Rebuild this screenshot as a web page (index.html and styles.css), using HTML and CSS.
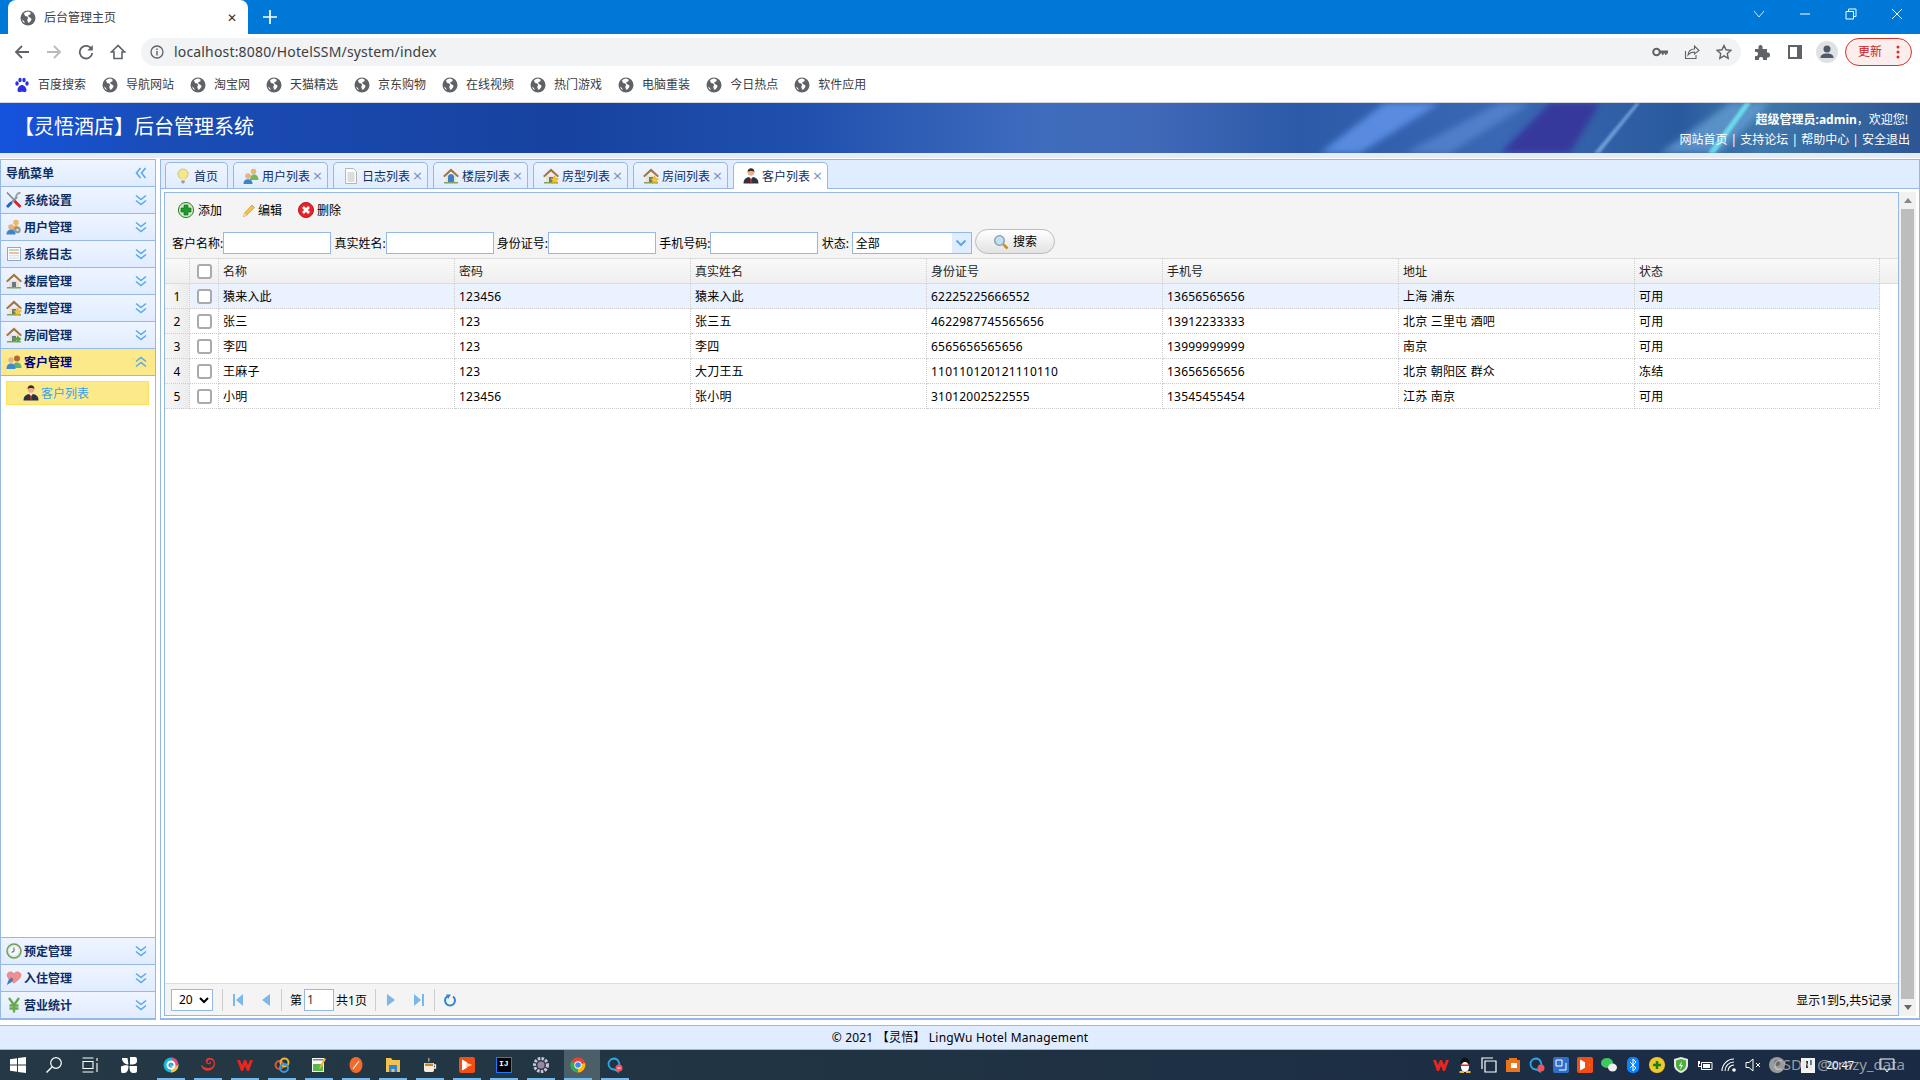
FILE: index.html
```html
<!DOCTYPE html>
<html lang="zh-CN">
<head>
<meta charset="utf-8">
<title>后台管理主页</title>
<link rel="stylesheet" href="styles.css">
</head>
<body>
<svg class="defs" width="0" height="0" aria-hidden="true">
  <defs>
    <symbol id="globe" viewBox="0 0 16 16"><circle cx="8" cy="8" r="7.500" fill="#5f6368"/><path fill="#fff" d="M8.500 1.600C6.800 1.600 5 2.400 3.900 3.600l1.200 2.300 2.200.6.9 1.500-1 1.800.9 3 1.600-.6 1.800-2.400-.4-1.600-2.500-1.400-.4-1.500 2-.9.6-1.600zM2 9.500l2 1.500.8 2.300C3.400 12.500 2.400 11 2 9.500z"/></symbol>
    <symbol id="chev" viewBox="0 0 16 16"><path fill="none" stroke="#5aa9ea" stroke-width="1.600" d="M3 3.500l5 4 5-4M3 8.500l5 4 5-4"/></symbol>
    <symbol id="chevup" viewBox="0 0 16 16"><path fill="none" stroke="#5aa9ea" stroke-width="1.600" d="M3 7.500l5-4 5 4M3 12.500l5-4 5 4"/></symbol>
    <symbol id="chevl" viewBox="0 0 16 16"><path fill="none" stroke="#5aa9ea" stroke-width="1.600" d="M7.500 3l-4 5 4 5M12.500 3l-4 5 4 5"/></symbol>
    <symbol id="tools" viewBox="0 0 16 16"><path stroke="#7b8794" stroke-width="1.600" d="M1 .5L14 14"/><path stroke="#d22" stroke-width="2.800" d="M8 8.500l6.500 6.500"/><path stroke="#9aa4ad" stroke-width="2" fill="none" d="M14.500 1a3.500 3.500 0 0 0-4 4.500"/><path stroke="#8a949e" stroke-width="2.200" d="M11 5L3 13"/><path stroke="#1f62c9" stroke-width="3" d="M5.500 10.500L1 15"/></symbol>
    <symbol id="users" viewBox="0 0 16 16"><circle cx="10" cy="3.500" r="2.800" fill="#eab669"/><path fill="#d6a24f" d="M6.500 11c0-3 1.500-4.500 3.500-4.500s4 1.500 4 4.500z"/><circle cx="11.500" cy="11" r="3.200" fill="#8d9a8f"/><circle cx="11.500" cy="11" r="1.200" fill="#dfe6df"/><circle cx="5" cy="8" r="2.800" fill="#e8b189"/><path fill="#3d86c6" d="M.5 15.500c0-3.500 2-5 4.500-5s4.500 1.500 4.500 5z"/></symbol>
    <symbol id="usersg" viewBox="0 0 16 16"><circle cx="10.500" cy="3.500" r="2.800" fill="#eab669"/><path fill="#78b94f" d="M7 12c0-3.500 1.500-5.500 4-5.500s4.500 2 4.500 5.500z"/><circle cx="5" cy="8" r="2.800" fill="#e8b189"/><path fill="#3d86c6" d="M.5 16c0-3.500 2-4.800 4.500-4.800s4.500 1.300 4.500 4.800z"/></symbol>
    <symbol id="log" viewBox="0 0 16 16"><rect x="1.500" y="1.500" width="13" height="13" fill="#fff" stroke="#8fa6c4"/><path fill="#b8e0b0" d="M3 3h10v2H3z"/><path fill="#f6b7b0" d="M3 6h10v2H3z"/><path fill="#dde3ee" d="M3 9h10v1.500H3zM3 11.500h10V13H3z"/></symbol>
    <symbol id="doc" viewBox="0 0 16 16"><path fill="#fdfdfd" stroke="#b4b4b4" d="M2.500.5h8l3 3v12h-11z"/><path stroke="#bcbcbc" d="M4.500 5h7M4.500 7h7M4.500 9h7M4.500 11h7M4.500 13h7"/></symbol>
    <symbol id="house" viewBox="0 0 16 16"><path fill="#e9e3d2" d="M3 7.500h10V14H3z"/><path fill="#a5743f" d="M8 .5L0 8l1.500 1.200L8 3.500l6.500 5.700L16 8z"/><path fill="#6b7680" d="M6 9h4v5H6z"/><path fill="#7fa45a" d="M1 14h14v1.500H1z"/></symbol>
    <symbol id="housestar" viewBox="0 0 16 16"><use href="#house"/><path fill="#f6c92f" stroke="#c79a16" stroke-width=".5" d="M11.500 8l1.200 2.500 2.800.3-2 1.900.5 2.800-2.500-1.400-2.500 1.400.5-2.800-2-1.900 2.800-.3z"/></symbol>
    <symbol id="housearrow" viewBox="0 0 16 16"><use href="#house"/><path fill="#52a83c" d="M7 10.500h4V8.500l4.500 3.500L11 15.500v-2H7z"/></symbol>
    <symbol id="houseblue" viewBox="0 0 16 16"><use href="#house"/><path fill="#3f7fc4" d="M5 9c0-2 1.500-3 3-3s3 1 3 3v5H5z"/></symbol>
    <symbol id="cust" viewBox="0 0 16 16"><circle cx="11" cy="4.500" r="3" fill="#b5672b"/><path fill="#5fb17a" d="M7 14c0-4 1.500-5.500 4-5.500s4.500 1.500 4.500 5.500z"/><circle cx="5" cy="6" r="2.700" fill="#e8b189"/><path fill="#3b8bd0" d="M.5 15c0-4 2-5.500 4.500-5.500S9.500 11 9.500 15z"/></symbol>
    <symbol id="man" viewBox="0 0 16 16"><circle cx="8" cy="4.300" r="3.400" fill="#e8b189"/><path fill="#3a2a20" d="M4.600 4c0-2.600 1.500-3.800 3.400-3.800S11.400 1.400 11.400 4C10 2.800 6 2.800 4.600 4z"/><path fill="#2c3444" d="M.5 15.500c0-5 3-6.500 7.500-6.500s7.500 1.500 7.500 6.500z"/><path fill="#fff" d="M6.300 9h3.400L8 12z"/><path fill="#c12a2a" d="M7.500 10h1l.5 4-1 1.500L7 14z"/></symbol>
    <symbol id="bulb" viewBox="0 0 16 16"><circle cx="8" cy="6" r="5" fill="#f3e98c" stroke="#c9b94f" stroke-width=".8"/><path fill="#f3e98c" d="M6 10h4l-.4 2.500H6.400z"/><path fill="#9a9a9a" d="M6.300 12.500h3.400v2L8 15.800l-1.700-1.300z"/></symbol>
    <symbol id="clock" viewBox="0 0 16 16"><circle cx="8" cy="8" r="7" fill="#dfe8d8" stroke="#6fa05a" stroke-width="1.500"/><circle cx="8" cy="8" r="4.800" fill="#f4f6fa"/><path stroke="#56708f" stroke-width="1.100" fill="none" d="M8 4.500V8l-2.300 1.500"/></symbol>
    <symbol id="heart" viewBox="0 0 16 16"><path fill="#f08f8f" stroke="#d96a6a" stroke-width=".6" d="M8 13C2 9 .5 6.500 1.500 3.800 2.500 1.500 6 1 8 3.800 10 1 13.500 1.500 14.700 3.800 15.700 6.500 14 9 8 13z"/><path fill="#4a78b8" d="M.8 15l1.700-5 3-2.500 2 2-2.500 3z"/></symbol>
    <symbol id="yen" viewBox="0 0 16 16"><path fill="none" stroke="#6aa84f" stroke-width="2.400" d="M3 1l5 7 5-7M8 8v7.500M3.500 8.500h9M3.500 11.500h9"/></symbol>
    <symbol id="add" viewBox="0 0 16 16"><circle cx="8" cy="8" r="7.600" fill="#cfe8c8" stroke="#2f7f2f"/><path fill="#1c9a2a" stroke="#0e6a18" stroke-width=".6" d="M6 3h4v3h3v4h-3v3H6v-3H3V6h3z"/></symbol>
    <symbol id="pencil" viewBox="0 0 16 16"><path fill="#f2c14e" stroke="#c48a20" stroke-width=".6" d="M10 3l2.500 2.500-8 8L1.500 14.500 2.500 11z"/><path fill="#f5d9a8" d="M2.500 11l2 2.500-3 1z"/></symbol>
    <symbol id="del" viewBox="0 0 16 16"><circle cx="8" cy="8" r="7.500" fill="#e8232a" stroke="#b9151b"/><path stroke="#fff" stroke-width="2.600" d="M5 5l6 6M11 5l-6 6"/></symbol>
    <symbol id="search" viewBox="0 0 16 16"><circle cx="6.500" cy="6.500" r="4.800" fill="#bfe0f5" stroke="#8a97a3" stroke-width="1.300"/><path stroke="#c88b2a" stroke-width="2.500" d="M10.300 10.300l4.200 4.200"/></symbol>
  </defs>
</svg>

<div class="titlebar">
  <div class="ctab">
    <svg class="i16"><use href="#globe"/></svg>
    <span class="ctab-title">后台管理主页</span>
    <span class="ctab-x">✕</span>
  </div>
  <svg class="newtab" viewBox="0 0 14 14"><path stroke="#fff" stroke-width="1.700" d="M7 0v14M0 7h14"/></svg>
  <div class="winctl">
    <svg class="wc" viewBox="0 0 14 14"><path fill="none" stroke="#cfe6f8" d="M2 4l5 6 5-6"/></svg>
    <svg class="wc" viewBox="0 0 14 14"><path stroke="#fff" d="M2 7h10"/></svg>
    <svg class="wc" viewBox="0 0 14 14"><path fill="none" stroke="#fff" d="M2 4.500h7.500V12H2zM4.500 4.500V2H12v7.500H9.500"/></svg>
    <svg class="wc" viewBox="0 0 14 14"><path stroke="#fff" d="M2 2l10 10M12 2L2 12"/></svg>
  </div>
</div>

<div class="toolbar">
  <svg class="nav" viewBox="0 0 16 16"><path fill="none" stroke="#5f6368" stroke-width="1.800" d="M15 8H2M8 2L2 8l6 6"/></svg>
  <svg class="nav" viewBox="0 0 16 16"><path fill="none" stroke="#b8babd" stroke-width="1.800" d="M1 8h13M8 2l6 6-6 6"/></svg>
  <svg class="nav" viewBox="0 0 16 16"><path fill="none" stroke="#5f6368" stroke-width="1.800" d="M13.500 5A6.300 6.300 0 1 0 14.300 9"/><path fill="#5f6368" d="M14.800 1v5.500H9.300z"/></svg>
  <svg class="nav" viewBox="0 0 16 16"><path fill="none" stroke="#5f6368" stroke-width="1.600" d="M8 1.500L1.500 8H4v6.500h8V8h2.500z"/></svg>
  <div class="omni">
    <svg class="info" viewBox="0 0 14 14"><circle cx="7" cy="7" r="6" fill="none" stroke="#5f6368" stroke-width="1.300"/><path stroke="#5f6368" stroke-width="1.400" d="M7 6v4.500M7 3.500v1.500"/></svg>
    <span class="url">localhost:8080/HotelSSM/system/index</span>
    <span class="omni-r">
      <svg class="nav" viewBox="0 0 16 16"><circle cx="4.500" cy="8" r="3.300" fill="none" stroke="#5f6368" stroke-width="2"/><path fill="#5f6368" d="M7.500 6.500H16V9.500H14.500V11H13V9.500H11.500V11H10V9.500H7.500z"/></svg>
      <svg class="nav" viewBox="0 0 16 16"><path fill="none" stroke="#5f6368" stroke-width="1.100" d="M1.500 7v7.500H12V11M4 11c.5-4 3-6 6.500-6V2L15 6.500 10.500 10V8C8 8 5.500 9 4 11z"/></svg>
      <svg class="nav" viewBox="0 0 16 16"><path fill="none" stroke="#5f6368" stroke-width="1.400" d="M8 1.500l2 4.300 4.700.6-3.400 3.200.9 4.700L8 11.900l-4.200 2.400.9-4.700L1.300 6.400 6 5.800z"/></svg>
    </span>
  </div>
  <div class="tool-r">
    <svg class="nav" viewBox="0 0 16 16"><path fill="#5f6368" d="M1 5h3.500C4 2.500 5 1 6.500 1S9 2.500 8.500 5H13v3.500c2.500-.5 3 1 3 2.500s-.5 3-3 2.500V16H9c.5-2-.5-3-2-3s-2.500 1-2 3H1v-4c2 .5 3-.5 3-2S3 7.500 1 8z"/></svg>
    <svg class="nav" viewBox="0 0 16 16"><path fill="#5f6368" d="M1 1h14v14H1zM3 3v10h7V3z"/></svg>
    <svg class="avatar" viewBox="0 0 22 22"><circle cx="11" cy="11" r="11" fill="#dfe1e5"/><circle cx="11" cy="8" r="3.500" fill="#4f5a66"/><path fill="#4f5a66" d="M4.500 17c0-3.500 3-4.500 6.500-4.500s6.500 1 6.500 4.500z"/></svg>
    <div class="update"><span>更新</span><svg class="dots" viewBox="0 0 4 16"><circle cx="2" cy="3" r="1.500"/><circle cx="2" cy="8" r="1.500"/><circle cx="2" cy="13" r="1.500"/></svg></div>
  </div>
</div>

<div class="bookmarks">
  <span class="bm"><svg class="i16" viewBox="0 0 16 16"><path fill="#2932e1" d="M8 8c2 0 4.500 2.500 4.500 5 0 1.500-1 2.500-2.500 2-1.500-.4-2.500-.4-4 0-1.500.5-2.500-.5-2.500-2 0-2.500 2.500-5 4.500-5z"/><ellipse cx="3" cy="6.500" rx="1.700" ry="2.200" fill="#2932e1"/><ellipse cx="6" cy="3" rx="1.700" ry="2.300" fill="#2932e1"/><ellipse cx="10" cy="3" rx="1.700" ry="2.300" fill="#2932e1"/><ellipse cx="13" cy="6.500" rx="1.700" ry="2.200" fill="#2932e1"/></svg>百度搜索</span>
  <span class="bm"><svg class="i16"><use href="#globe"/></svg>导航网站</span>
  <span class="bm"><svg class="i16"><use href="#globe"/></svg>淘宝网</span>
  <span class="bm"><svg class="i16"><use href="#globe"/></svg>天猫精选</span>
  <span class="bm"><svg class="i16"><use href="#globe"/></svg>京东购物</span>
  <span class="bm"><svg class="i16"><use href="#globe"/></svg>在线视频</span>
  <span class="bm"><svg class="i16"><use href="#globe"/></svg>热门游戏</span>
  <span class="bm"><svg class="i16"><use href="#globe"/></svg>电脑重装</span>
  <span class="bm"><svg class="i16"><use href="#globe"/></svg>今日热点</span>
  <span class="bm"><svg class="i16"><use href="#globe"/></svg>软件应用</span>
</div>

<header class="apphead">
  <svg class="rays" viewBox="0 0 1920 50" preserveAspectRatio="none" aria-hidden="true">
    <defs><filter id="soft"><feGaussianBlur stdDeviation="3"/></filter><filter id="softer"><feGaussianBlur stdDeviation="1.200"/></filter></defs>
    <g filter="url(#soft)">
      <polygon points="1320,50 1385,0 1440,0 1360,50" fill="#5f93e8" opacity=".85"/>
      <polygon points="1405,50 1500,0 1530,0 1450,50" fill="#5f8fd8" opacity=".6"/>
      <polygon points="1500,50 1550,0 1600,0 1570,50" fill="#36379b" opacity=".95"/>
      <polygon points="1660,50 1730,0 1770,0 1720,50" fill="#6aa3d6" opacity=".7"/>
    </g>
    <g filter="url(#softer)">
      <polygon points="1594,50 1636,0 1640,0 1600,50" fill="#84b7e8" opacity=".7"/>
      <polygon points="1708,50 1745,0 1751,0 1715,50" fill="#6ee6f0" opacity=".85"/>
    </g>
  </svg>
  <h1 class="brand">【灵悟酒店】后台管理系统</h1>
  <div class="userbox">
    <div class="welcome"><b>超级管理员:admin</b>，欢迎您!</div>
    <div class="links">网站首页 | 支持论坛 | 帮助中心 | 安全退出</div>
  </div>
</header>

<main class="main">
  <aside class="side">
    <div class="side-head"><span>导航菜单</span><svg class="chev"><use href="#chevl"/></svg></div>
    <div class="acc"><svg class="i16"><use href="#tools"/></svg><span>系统设置</span><svg class="chev"><use href="#chev"/></svg></div>
    <div class="acc"><svg class="i16"><use href="#users"/></svg><span>用户管理</span><svg class="chev"><use href="#chev"/></svg></div>
    <div class="acc"><svg class="i16"><use href="#log"/></svg><span>系统日志</span><svg class="chev"><use href="#chev"/></svg></div>
    <div class="acc"><svg class="i16"><use href="#house"/></svg><span>楼层管理</span><svg class="chev"><use href="#chev"/></svg></div>
    <div class="acc"><svg class="i16"><use href="#housestar"/></svg><span>房型管理</span><svg class="chev"><use href="#chev"/></svg></div>
    <div class="acc"><svg class="i16"><use href="#housearrow"/></svg><span>房间管理</span><svg class="chev"><use href="#chev"/></svg></div>
    <div class="acc acc-on"><svg class="i16"><use href="#cust"/></svg><span>客户管理</span><svg class="chev"><use href="#chevup"/></svg></div>
    <div class="acc-body">
      <div class="subitem"><svg class="i16"><use href="#man"/></svg><span>客户列表</span></div>
    </div>
    <div class="acc acc-top"><svg class="i16"><use href="#clock"/></svg><span>预定管理</span><svg class="chev"><use href="#chev"/></svg></div>
    <div class="acc"><svg class="i16"><use href="#heart"/></svg><span>入住管理</span><svg class="chev"><use href="#chev"/></svg></div>
    <div class="acc"><svg class="i16"><use href="#yen"/></svg><span>营业统计</span><svg class="chev"><use href="#chev"/></svg></div>
  </aside>

  <section class="content">
    <nav class="tabs">
      <div class="tab tab-home"><svg class="i16"><use href="#bulb"/></svg><span>首页</span></div>
      <div class="tab"><svg class="i16"><use href="#usersg"/></svg><span>用户列表</span><i class="x">×</i></div>
      <div class="tab"><svg class="i16"><use href="#doc"/></svg><span>日志列表</span><i class="x">×</i></div>
      <div class="tab"><svg class="i16"><use href="#houseblue"/></svg><span>楼层列表</span><i class="x">×</i></div>
      <div class="tab"><svg class="i16"><use href="#housestar"/></svg><span>房型列表</span><i class="x">×</i></div>
      <div class="tab"><svg class="i16"><use href="#housestar"/></svg><span>房间列表</span><i class="x">×</i></div>
      <div class="tab tab-on"><svg class="i16"><use href="#man"/></svg><span>客户列表</span><i class="x">×</i></div>
    </nav>
    <div class="tabbody">
      <div class="panel">
        <div class="gridtool">
          <div class="btnrow">
            <span class="lbtn b-add"><svg class="i16"><use href="#add"/></svg><span>添加</span></span>
            <span class="lbtn b-edit"><svg class="i16"><use href="#pencil"/></svg><span>编辑</span></span>
            <span class="lbtn b-del"><svg class="i16"><use href="#del"/></svg><span>删除</span></span>
          </div>
          <div class="filter">
            <label class="fld">客户名称:<input type="text"></label>
            <label class="fld">真实姓名:<input type="text"></label>
            <label class="fld">身份证号:<input type="text"></label>
            <label class="fld">手机号码:<input type="text"></label>
            <span class="fld">状态:<span class="combo"><span class="combo-t">全部</span><span class="combo-a"><svg viewBox="0 0 12 8"><path fill="none" stroke="#5aa9ea" stroke-width="2" d="M1.500 1.500L6 6l4.500-4.500"/></svg></span></span></span>
            <span class="sbtn"><svg class="i16"><use href="#search"/></svg>搜索</span>
          </div>
        </div>
        <div class="gridwrap">
          <table class="grid">
            <colgroup><col class="c-n"><col class="c-c"><col class="c-w"><col class="c-w"><col class="c-w"><col class="c-w"><col class="c-w"><col class="c-w"><col class="c-l"><col></colgroup>
            <thead>
              <tr><th></th><th class="ck"><input type="checkbox"></th><th>名称</th><th>密码</th><th>真实姓名</th><th>身份证号</th><th>手机号</th><th>地址</th><th>状态</th><th class="fill"></th></tr>
            </thead>
            <tbody>
              <tr class="sel"><td class="num">1</td><td class="ck"><input type="checkbox"></td><td>猿来入此</td><td>123456</td><td>猿来入此</td><td>62225225666552</td><td>13656565656</td><td>上海 浦东</td><td>可用</td><td class="fill"></td></tr>
              <tr><td class="num">2</td><td class="ck"><input type="checkbox"></td><td>张三</td><td>123</td><td>张三五</td><td>4622987745565656</td><td>13912233333</td><td>北京 三里屯 酒吧</td><td>可用</td><td class="fill"></td></tr>
              <tr><td class="num">3</td><td class="ck"><input type="checkbox"></td><td>李四</td><td>123</td><td>李四</td><td>6565656565656</td><td>13999999999</td><td>南京</td><td>可用</td><td class="fill"></td></tr>
              <tr><td class="num">4</td><td class="ck"><input type="checkbox"></td><td>王麻子</td><td>123</td><td>大刀王五</td><td>110110120121110110</td><td>13656565656</td><td>北京 朝阳区 群众</td><td>冻结</td><td class="fill"></td></tr>
              <tr><td class="num">5</td><td class="ck"><input type="checkbox"></td><td>小明</td><td>123456</td><td>张小明</td><td>31012002522555</td><td>13545455454</td><td>江苏 南京</td><td>可用</td><td class="fill"></td></tr>
            </tbody>
          </table>
        </div>
        <div class="pager">
          <select class="psize"><option>20</option></select>
          <i class="sep"></i>
          <svg class="pg" viewBox="0 0 14 16"><path fill="#7bb7e8" d="M2 2h2v12H2zM12 2v12L5 8z"/></svg>
          <svg class="pg" viewBox="0 0 14 16"><path fill="#7bb7e8" d="M11 2v12L3 8z"/></svg>
          <i class="sep"></i>
          <span class="ptxt">第</span><input class="pnum" type="text" value="1"><span class="ptxt">共1页</span>
          <i class="sep"></i>
          <svg class="pg" viewBox="0 0 14 16"><path fill="#7bb7e8" d="M3 2v12l8-6z"/></svg>
          <svg class="pg" viewBox="0 0 14 16"><path fill="#7bb7e8" d="M10 2h2v12h-2zM2 2v12l7-6z"/></svg>
          <i class="sep"></i>
          <svg class="pg" viewBox="0 0 14 16"><path fill="none" stroke="#2f86d2" stroke-width="2" d="M4 4.500a5 5 0 1 0 6 0"/><path fill="#2f86d2" d="M3 2.500h5L5 7z"/></svg>
          <span class="pinfo">显示1到5,共5记录</span>
        </div>
      </div>
      <div class="vscroll">
        <svg class="arr" viewBox="0 0 10 6"><path fill="#888" d="M5 0l5 6H0z"/></svg>
        <div class="thumb"></div>
        <svg class="arr" viewBox="0 0 10 6"><path fill="#666" d="M5 6L0 0h10z"/></svg>
      </div>
    </div>
  </section>
</main>

<footer class="foot">© 2021 【灵悟】 LingWu Hotel Management</footer>

<div class="taskbar">
  <span class="sys"><svg class="i16" viewBox="0 0 16 16"><path fill="#fff" d="M0 2.300l7-1v6.300H0zM8 1.100l8-1.100v7.600H8zM0 8.400h7v6.300l-7-1zM8 8.400h8V16l-8-1.100z"/></svg></span>
  <span class="sys"><svg class="i16" viewBox="0 0 16 16"><circle cx="10" cy="6" r="5.300" fill="none" stroke="#fff" stroke-width="1.200"/><path stroke="#fff" stroke-width="1.400" d="M6 10l-5.500 5.500"/></svg></span>
  <span class="sys"><svg class="i16" viewBox="0 0 16 16"><path fill="none" stroke="#fff" stroke-width="1.100" d="M.5 1h11M.5 15h11M1 4.500h10v7H1zM15 1v3M15 6v9"/></svg></span>
  <span class="sys sys-w"><svg class="i16" viewBox="0 0 16 16"><path fill="#fff" d="M1 1h5.500l1 6.500C4 7.500 1 5 1 1zM9 0h5c2 0 2 2 2 4 0 3-3 3.500-7 3.500zM16 9v5c0 2-2 2-4 2-3 0-3.500-3-3.500-7zM0 9.500C3 8 7 8 7.500 9c0 4-1.500 7-4 7H1C0 16 0 13 0 9.500z"/><path fill="#243945" d="M7.500 7.500h1v1h-1z"/></svg></span>
  <span class="app"><svg class="i16" viewBox="0 0 16 16"><circle cx="8" cy="8" r="7.500" fill="#19b8d8"/><path fill="#f0487c" d="M8 .5a7.500 7.500 0 0 1 7.500 7.500H12z"/><path fill="#f5c242" d="M15.500 8A7.500 7.500 0 0 1 8 15.500V12z"/><circle cx="8" cy="8" r="4.500" fill="#fff"/><path stroke="#19a0d8" stroke-width="1.300" fill="none" d="M6 8h4a2 2 0 1 0-.6 1.600"/></svg></span>
  <span class="app"><svg class="i16" viewBox="0 0 16 16"><path fill="#e8352d" d="M1 8c1 5 6 7 10 5s5-7 3-10-7-3-8 0 2 5 4 4 1-3-.5-2.500c1 2-2 2-2 .5 0-3 5-3 6 0s-1 6-5 6-5-2-7.500-3z"/></svg></span>
  <span class="app"><svg class="i16" viewBox="0 0 16 16"><path fill="#e8261f" d="M0 3h3l2 5 2-5h2l2 5 2-5h3l-4 11h-2L8 9l-2 5H4z"/></svg></span>
  <span class="app"><svg class="i16" viewBox="0 0 16 16"><circle cx="5.500" cy="8" r="4" fill="none" stroke="#e8512d" stroke-width="2"/><circle cx="10.500" cy="5.500" r="4" fill="none" stroke="#f2b632" stroke-width="2"/><circle cx="10" cy="11" r="4" fill="none" stroke="#2f9be0" stroke-width="2"/></svg></span>
  <span class="app"><svg class="i16" viewBox="0 0 16 16"><path fill="#fafafa" d="M1 1h12v14H1z"/><path fill="#5bb848" d="M2 7h10v7H2z"/><path fill="#888" d="M2 2h10v1.500H2z"/><path fill="#f2b632" d="M13 1l2 1-5 9-2 1 .5-2z"/></svg></span>
  <span class="app"><svg class="i16" viewBox="0 0 16 16"><ellipse cx="8" cy="8" rx="6.500" ry="8" fill="#f26b2d"/><path stroke="#fff" stroke-width="1.100" d="M5 12l6-8"/></svg></span>
  <span class="app"><svg class="i16" viewBox="0 0 16 16"><path fill="#f2c14e" d="M1 1h5l1.500 2H15v12H1z"/><path fill="#2f86d2" d="M4 8h8v7h-2.500v-3h-3v3H4z"/></svg></span>
  <span class="app"><svg class="i16" viewBox="0 0 16 16"><path fill="#f7ecd8" d="M2 6h10v7c0 1.500-1 2-2 2H4c-1 0-2-.5-2-2z"/><path fill="none" stroke="#f7ecd8" stroke-width="1.300" d="M12 8h1.500v3H12"/><path fill="#c98330" d="M3 6.500h8V9H3z"/><path fill="#9a9a9a" d="M6 1h1.500v3.500H6z"/></svg></span>
  <span class="app"><svg class="i16" viewBox="0 0 16 16"><rect width="16" height="16" rx="2" fill="#f04e12"/><path fill="#fff" d="M3 2.500l10 5.500-10 5.500z"/><path fill="#f04e12" d="M8 4l5 4-5 4z"/><path fill="#ffd3b8" d="M7 5.500L13 8l-6 2.500z"/></svg></span>
  <span class="app"><span class="ij">IJ</span></span>
  <span class="app"><svg class="i16" viewBox="0 0 16 16"><circle cx="8" cy="8" r="6.500" fill="#3a3752" stroke="#c9c6d6" stroke-width="3" stroke-dasharray="2.500 1.300"/><circle cx="8" cy="8" r="3.500" fill="#8f8ba3"/></svg></span>
  <span class="app app-on"><svg class="i16" viewBox="0 0 16 16"><circle cx="8" cy="8" r="7.500" fill="#ea4335"/><path fill="#fbbc05" d="M8 8L15 6a7.500 7.500 0 0 1-7 9.500z"/><path fill="#34a853" d="M8 8v7.500A7.500 7.500 0 0 1 1.500 4z"/><circle cx="8" cy="8" r="3.700" fill="#fff"/><circle cx="8" cy="8" r="2.800" fill="#4285f4"/></svg></span>
  <span class="app"><svg class="i16" viewBox="0 0 16 16"><path fill="none" stroke="#2ba8e8" stroke-width="1.800" d="M7 1.500a5.500 5.500 0 1 0 0 11h.5l3.500 2-.5-3.500A5.500 5.500 0 0 0 7 1.500z"/><circle cx="12" cy="11" r="3.500" fill="#f2545b"/><path stroke="#fff" d="M10.500 11h3"/></svg></span>
  <div class="tray">
    <svg class="t16" viewBox="0 0 16 16"><path fill="#e8261f" d="M0 3h3l2 5 2-5h2l2 5 2-5h3l-4 11h-2L8 9l-2 5H4z"/></svg>
    <svg class="t16" viewBox="0 0 16 16"><ellipse cx="8" cy="6" rx="4.500" ry="5.500" fill="#111"/><ellipse cx="8" cy="10" rx="4" ry="5" fill="#fff"/><path fill="#e22" d="M3.500 7.500h9V9h-9z"/><path fill="#f5b82e" d="M2.500 14h4.500v2H2.500zM9 14h4.500v2H9z"/></svg>
    <svg class="t16" viewBox="0 0 16 16"><path fill="none" stroke="#fff" stroke-width="1.200" d="M4 4h11v11H4zM1 12V1h11"/></svg>
    <svg class="t16" viewBox="0 0 16 16"><path fill="#e8751d" d="M1 3h3V1h8v2h3v12H1z"/><path fill="#fff" d="M6 6h6v5H6z"/></svg>
    <svg class="t16" viewBox="0 0 16 16"><path fill="none" stroke="#2ba8e8" stroke-width="1.800" d="M7 1.500a5.500 5.500 0 1 0 0 11h.5l3.500 2-.5-3.500A5.500 5.500 0 0 0 7 1.500z"/><circle cx="12" cy="11" r="3.500" fill="#f2545b"/></svg>
    <svg class="t16" viewBox="0 0 16 16"><rect width="16" height="16" rx="2" fill="#2f6fc9"/><path fill="none" stroke="#fff" d="M3 3h6v6H3zM6 13h7V6"/></svg>
    <svg class="t16" viewBox="0 0 16 16"><rect width="16" height="16" rx="2" fill="#f04e12"/><path fill="#fff" d="M3 2.500l10 5.500-10 5.500z"/><path fill="#f04e12" d="M8 4l5 4-5 4z"/></svg>
    <svg class="t16" viewBox="0 0 16 16"><ellipse cx="6" cy="6" rx="6" ry="5" fill="#3cc95f"/><ellipse cx="11.500" cy="10.500" rx="4.500" ry="4" fill="#eee"/></svg>
    <svg class="t16" viewBox="0 0 16 16"><rect x="2" width="12" height="16" rx="5" fill="#0a84ff"/><path fill="none" stroke="#fff" d="M5 5l6 6-3 3V2l3 3-6 6"/></svg>
    <svg class="t16" viewBox="0 0 16 16"><circle cx="8" cy="8" r="8" fill="#f1c82a"/><path stroke="#17801f" stroke-width="2.500" d="M8 4v8M4 8h8"/></svg>
    <svg class="t16" viewBox="0 0 16 16"><path fill="#e6e9e6" d="M8 0l7 2v6c0 4-3 6.500-7 8-4-1.500-7-4-7-8V2z"/><path fill="#4caf3a" d="M8 2l5 1.500V8c0 3-2 5-5 6-3-1-5-3-5-6V3.500z"/><path fill="#fff" d="M9 4L6 9h2l-1 4 3-5H8z"/></svg>
    <svg class="t16" viewBox="0 0 16 16"><path fill="none" stroke="#fff" d="M4.500 5.500h10.500v7H4.500z"/><path fill="#fff" d="M6 7h7v4H6zM1 4h2v3H1zM2 7v2h2v1H1V7z"/></svg>
    <svg class="t16" viewBox="0 0 16 16"><g fill="none" stroke="#fff" stroke-width="1.100"><path d="M1 14a12 12 0 0 1 12-12M4 14a9 9 0 0 1 9-9M7 14a6 6 0 0 1 6-6"/></g><circle cx="13" cy="13" r="1.800" fill="#fff"/></svg>
    <svg class="t16" viewBox="0 0 16 16"><path fill="none" stroke="#fff" d="M1 5.500h3L8 2v12L4 10.500H1zM11 6l4 4M15 6l-4 4"/></svg>
    <svg class="t16" viewBox="0 0 16 16"><circle cx="8" cy="8" r="8" fill="#9a9a9a"/><circle cx="8" cy="6" r="3" fill="#666"/></svg>
    <svg class="t16 t-white" viewBox="0 0 16 16"><path fill="#f2f2f2" d="M1 1h14v15H1z"/><path fill="#333" d="M6 4h2v7H6zM10 3h2v5h-2z"/></svg>
    <span class="clock">20:47</span>
    <svg class="t16 t-note" viewBox="0 0 16 16"><path fill="none" stroke="#fff" d="M1 2h14v10H10l-2 3-2-3H1z"/></svg>
  </div>
  <span class="wmark">CSDN @crazy_data</span>
</div>
</body>
</html>
```

FILE: styles.css
```css
* { box-sizing: border-box; }
html, body { margin: 0; padding: 0; }
body {
  width: 1920px; height: 1080px; overflow: hidden;
  display: flex; flex-direction: column;
  background: #fff; color: #000;
  font: 12px/16px "Noto Sans", "Noto Sans CJK SC", sans-serif;
}
.defs { position: absolute; }
svg { display: block; flex: none; }
.i16 { width: 16px; height: 16px; }

/* browser chrome */
.titlebar { height: 34px; background: #0078d7; display: flex; align-items: flex-end; padding-left: 8px; }
.ctab { width: 240px; height: 34px; background: #fff; border-radius: 8px 8px 0 0; display: flex; align-items: center; padding: 1px 11px 0 12px; }
.ctab-title { margin-left: 8px; color: #3c4043; flex: 1; }
.ctab-x { color: #333; font: 12px "DejaVu Sans", sans-serif; }
.newtab { width: 14px; height: 14px; margin: 0 0 10px 15px; }
.winctl { margin-left: auto; align-self: flex-start; display: flex; padding: 7px 16px 0 0; gap: 32px; }
.wc { width: 14px; height: 14px; }

.toolbar { height: 34px; display: flex; align-items: center; padding: 2px 0 0 14px; }
.nav { width: 16px; height: 16px; margin-right: 16px; }
.omni { width: 1600px; height: 28px; margin-left: -1px; background: #f1f3f4; border-radius: 14px; display: flex; align-items: center; padding-left: 9px; }
.info { width: 14px; height: 14px; }
.url { margin-left: 10px; font-size: 14px; letter-spacing: .17px; color: #3c4043; }
.omni-r { margin-left: auto; display: flex; }
.omni-r .nav { margin-right: 16px; }
.omni-r .nav:last-child { margin-right: 9px; }
.tool-r { display: flex; align-items: center; padding-left: 13px; }
.tool-r .nav { margin-right: 17px; }
.avatar { width: 22px; height: 22px; margin-left: -4px; }
.update { width: 67px; height: 28px; margin-left: 7px; border: 1px solid #d93025; border-radius: 14px; background: #fbeeed; color: #c5221f; display: flex; align-items: center; justify-content: space-between; padding: 0 11px 0 12px; }
.dots { width: 4px; height: 16px; fill: #d93025; }

.bookmarks { height: 35px; padding: 0 0 1px 14px; border-bottom: 1px solid #d6d6de; display: flex; align-items: center; gap: 16px; color: #3c4043; }
.bm { display: flex; align-items: center; gap: 8px; }

/* app header */
.apphead {
  position: relative; height: 50px; flex: none; display: flex; align-items: center; justify-content: space-between;
  padding: 0 10px 0 14px; color: #fff; overflow: hidden;
  background: linear-gradient(90deg, #1553de 0, #1a4db8 150px, #17429f 560px, #1f50ae 800px, #3f6cbd 1040px, #4069b8 1150px, #2c5aa8 1300px, #3a68b4 1500px, #2a5a9e 1680px, #3f78ac 1760px, #2c5694 1920px);
}
.rays { position: absolute; inset: 0; width: 100%; height: 100%; }
.brand { position: relative; margin: 0 0 2px; font-size: 20px; line-height: 28px; font-weight: 400; }
.userbox { position: relative; text-align: right; line-height: 20px; padding-top: 4px; }
.welcome { padding-right: 2px; }
.welcome b { font-weight: 700; }

/* layout */
.main { height: 872px; flex: none; display: flex; gap: 4px; padding: 6px 0 5px; background: linear-gradient(#e3ecf7 5px, #fff 5px); }

.side { width: 156px; display: flex; flex-direction: column; border: 1px solid #95b8e7; background: #fff; }
.side-head { height: 27px; flex: none; display: flex; align-items: center; justify-content: space-between; padding: 0 6px 0 5px; font-weight: 700; color: #0e2d5f; background: linear-gradient(#eff5ff, #e0ecff); border-bottom: 1px solid #95b8e7; }
.side-head span { padding-top: 2px; }
.chev { width: 16px; height: 16px; }
.acc { height: 27px; flex: none; display: flex; align-items: center; padding: 0 6px 0 5px; gap: 2px; font-weight: 700; color: #0e2d5f; background: linear-gradient(#eff5ff, #e0ecff); border-bottom: 1px solid #95b8e7; }
.acc span { flex: 1; padding-top: 2px; }
.acc-on { background: #fbe98a; color: #000080; }
.acc-top { border-top: 1px solid #95b8e7; height: 28px; }
.acc-body { flex: 1; padding: 5px 5px 0; }
.subitem { width: 143px; height: 24px; border: 1px solid #ffdf5e; background: #fce98a; color: #3aa0f0; display: flex; align-items: center; gap: 2px; padding-left: 16px; }
.subitem span { padding-top: 2px; }

.content { flex: 1; min-width: 0; display: flex; flex-direction: column; border: 1px solid #95b8e7; border-bottom-width: 2px; }
.tabs { height: 29px; flex: none; display: flex; gap: 5px; padding: 2px 0 0 4px; background: #e0ecff; border-bottom: 1px solid #95b8e7; }
.tab { width: 95px; height: 26px; display: flex; align-items: center; gap: 3px; padding: 0 4px 0 9px; color: #0e2d5f; white-space: nowrap; background: linear-gradient(#eff5ff, #e0ecff); border: 1px solid #95b8e7; border-bottom: 0; border-radius: 5px 5px 0 0; }
.tab span { flex: none; padding-top: 2px; }
.tab-home { width: 63px; }
.tab-on { height: 27px; background: #fff; }
.x { flex: none; margin-left: -1px; font: normal 13px/16px "DejaVu Sans", sans-serif; color: #7590b8; }

.tabbody { flex: 1; min-height: 0; display: flex; padding: 3px 3px 2px 3px; background: #fff; }
.panel { flex: 1; min-width: 0; display: flex; flex-direction: column; border: 1px solid #95b8e7; }

.gridtool { height: 65px; flex: none; background: #f4f4f4; }
.btnrow { height: 39px; padding: 9px 0 0 13px; display: flex; }
.lbtn { display: flex; align-items: center; height: 16px; white-space: nowrap; }
.lbtn span { padding-top: 2px; }
.b-add { gap: 4px; width: 64px; }
.b-edit { gap: 0; width: 56px; }
.b-del { gap: 3px; }
.filter { display: flex; align-items: center; height: 22px; padding: 0 0 0 7px; gap: 3.2px; }
.fld { display: flex; align-items: center; white-space: nowrap; }
.fld input { width: 108px; height: 22px; margin: -1px 0 0; border: 1px solid #95b8e7; background: #fff; padding: 0; }
.fld, .sbtn { padding-top: 1px; }
.combo { width: 120px; height: 22px; margin: -1px 0 0 3px; display: flex; border: 1px solid #95b8e7; background: #fff; }
.combo-t { flex: 1; padding-left: 3px; line-height: 21px; }
.combo-a { width: 19px; background: #e0ecff; display: flex; align-items: center; justify-content: center; }
.combo-a svg { width: 12px; height: 8px; }
.sbtn { width: 80px; height: 25px; margin-top: -3px; display: flex; align-items: center; justify-content: center; gap: 4px; border: 1px solid #bbb; border-radius: 13px; background: linear-gradient(#fff, #e2e2e2); }

.gridwrap { flex: 1; min-height: 0; background: #fff; }
.grid { width: 100%; table-layout: fixed; border-collapse: separate; border-spacing: 0; }
.c-n { width: 25px; } .c-c { width: 29px; } .c-w { width: 236px; } .c-l { width: 245px; }
.grid th, .grid td { height: 25px; padding: 2px 4px 0; text-align: left; font-weight: 400; white-space: nowrap; border-right: 1px dotted #ccc; border-bottom: 1px dotted #ccc; }
.grid td { letter-spacing: .2px; }
.grid th { height: 26px; background: linear-gradient(#f9f9f9, #efefef); border-top: 1px solid #ddd; border-bottom: 1px solid #ddd; color: #222; }
.grid .num { padding: 2px 0 0; text-align: center; background: linear-gradient(90deg, #f6f6f6, #ececec); }
.grid .ck { padding: 0 0 0 7px; }
.grid .fill { border-right: 0; }
.grid td.fill { border-bottom: 0; background: #fff; }
.sel td { background: #eaf2ff; }
.ck input { appearance: none; display: block; margin: 0; width: 15px; height: 15px; border: 2px solid #aaa; border-radius: 3px; background: #fff; }

.pager { height: 32px; flex: none; display: flex; align-items: center; padding-left: 6px; background: #f4f4f4; border-top: 1px solid #ddd; }
.psize { width: 42px; height: 22px; border: 1px solid #95b8e7; background: #fff; font: inherit; padding: 0 0 0 3px; border-radius: 0; }
.sep { width: 1px; height: 22px; background: #ccc; margin: 0 1px; }
.psize + .sep { margin-left: 9px; }
.pg { width: 14px; height: 16px; margin: 0 7px; }
.ptxt { white-space: nowrap; padding-top: 2px; }
.sep + .ptxt { margin-left: 7px; }
.ptxt + .sep { margin-left: 8px; }
.pnum { width: 30px; height: 22px; margin: 0 2px; border: 1px solid #95b8e7; padding: 0 0 0 2px; font: inherit; color: #333; background: #fff; }
.pinfo { margin-left: auto; padding: 2px 6px 0 0; }

.vscroll { width: 17px; flex: none; display: flex; flex-direction: column; align-items: center; background: #f1f1f1; }
.arr { width: 8px; height: 5px; margin: 6px 0; flex: none; }
.thumb { flex: 1; width: 13px; background: #bdbdbd; }

.foot { height: 25px; flex: none; border-top: 1px solid #95b8e7; border-bottom: 1px solid #95b8e7; background: #e0ecff; text-align: center; line-height: 24px; letter-spacing: .2px; }

/* taskbar */
.taskbar { position: relative; flex: 1; display: flex; align-items: stretch; background: linear-gradient(90deg, #243945, #203343 900px, #1a2a45); color: #fff; }
.sys { width: 36px; display: flex; align-items: center; justify-content: center; }
.sys-w { width: 49px; padding-right: 8px; }
.app { width: 37px; display: flex; align-items: center; justify-content: center; position: relative; padding-right: 9px; }
.app::after { content: ""; position: absolute; left: 0; bottom: 0; width: 28px; height: 2px; background: #76b9ed; }
.app-on { background: linear-gradient(90deg, #4a5f68 36px, transparent 36px); }
.ij { width: 16px; height: 16px; background: #000; border: 1px solid #1e78ff; font: 700 8px/12px "Liberation Mono", monospace; color: #fff; text-align: left; padding-left: 2px; }
.tray { margin-left: auto; display: flex; align-items: center; gap: 8px; padding-right: 25px; }
.t16 { width: 16px; height: 16px; }
.t-white { margin-left: 7px; }
.clock { font-size: 11px; color: #fff; margin: 0 8px 0 2px; }
.t-note { margin-left: 9px; }
.wmark { position: absolute; right: 15px; top: 4px; font-size: 15px; line-height: 20px; color: rgba(220, 220, 220, .65); }
```
